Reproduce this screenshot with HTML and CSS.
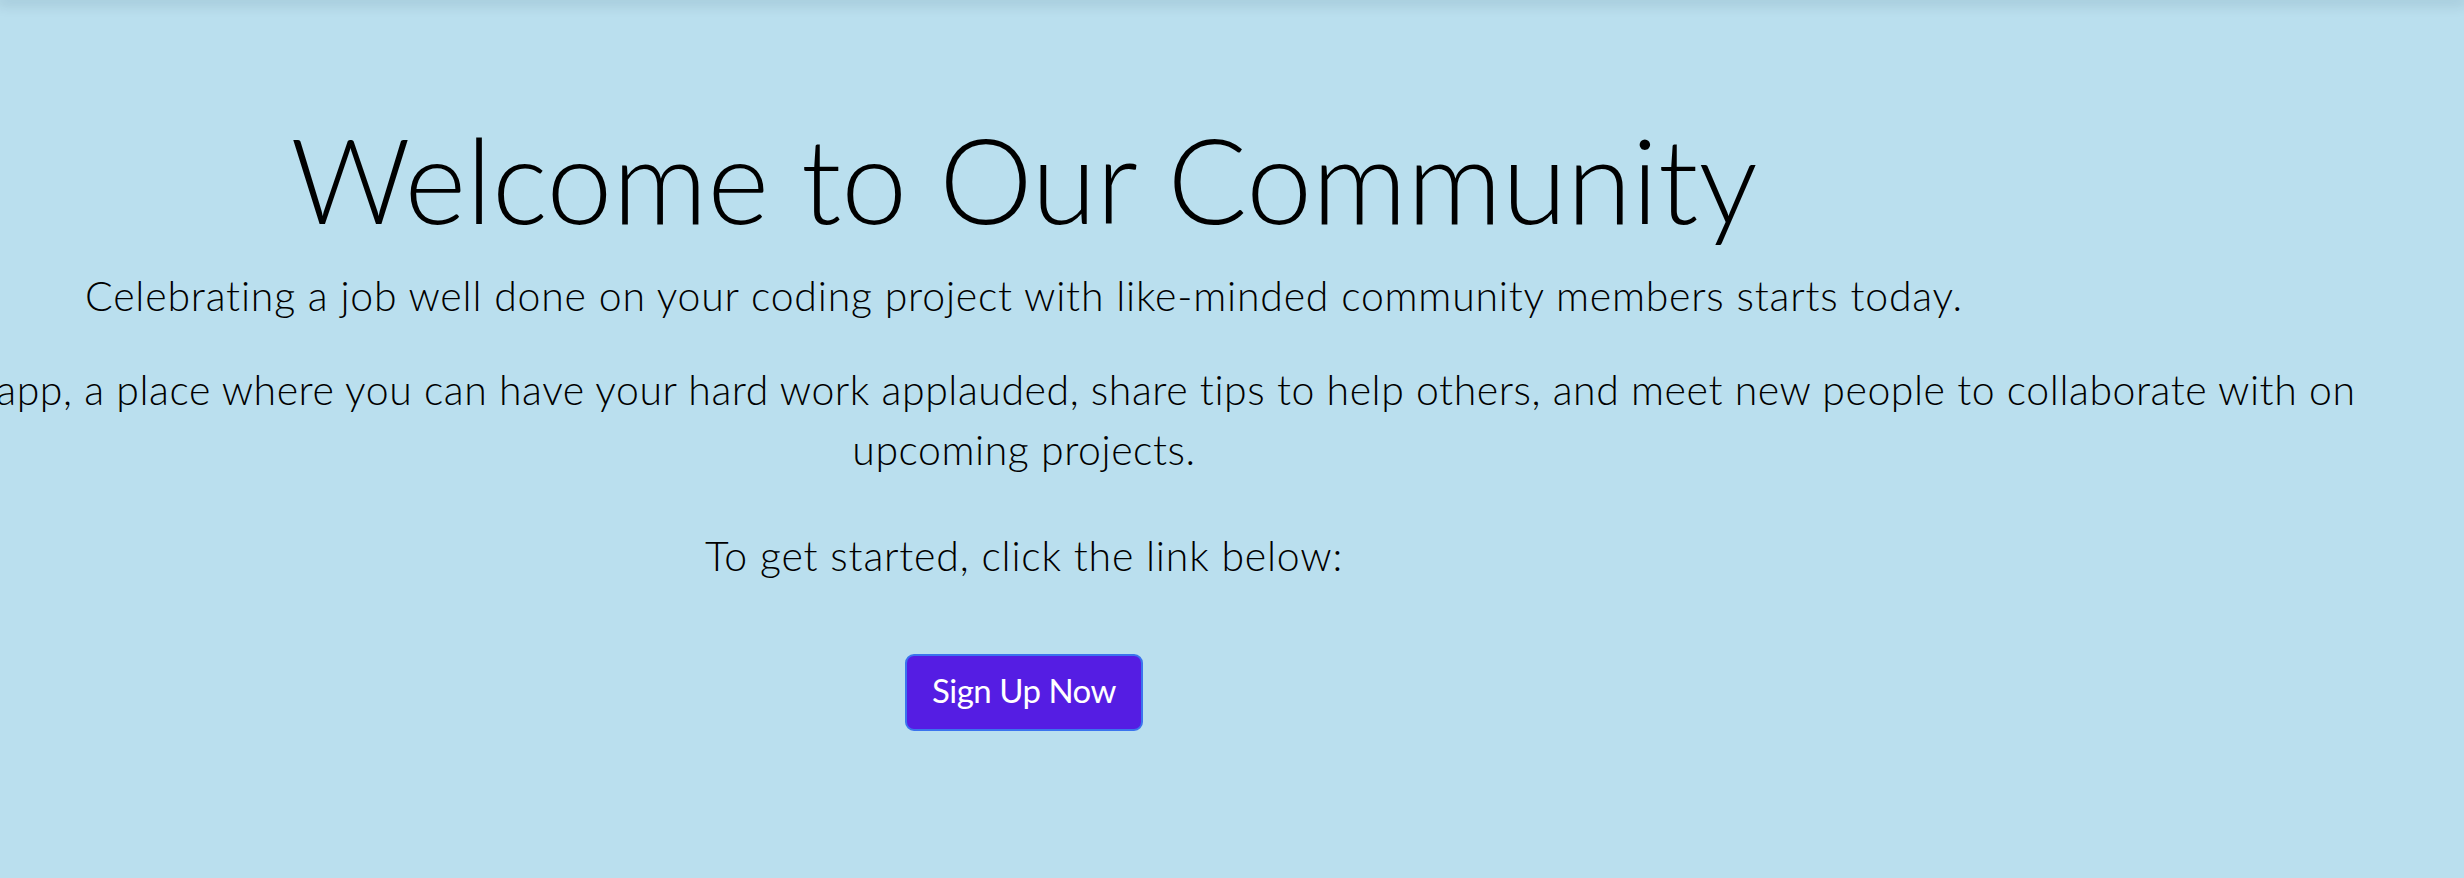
FILE: index.html
```html
<!DOCTYPE html>
<html lang="en">
<head>
<meta charset="utf-8">
<title>Welcome to Our Community</title>
<link rel="stylesheet" href="styles.css">
</head>
<body>
<header class="topbar"></header>
<main class="hero">
  <h1 class="hero-title">Welcome to Our Community</h1>
  <p class="lead">Celebrating a job well done on your coding project with like-minded community members starts today.</p>
  <p class="about">Welcome to our app, a place where you can have your hard work applauded, share tips to help others, and meet new people to collaborate with on<br>upcoming projects.</p>
  <p class="cta-text">To get started, click the link below:</p>
  <a class="signup-btn" href="#">Sign Up Now</a>
</main>
</body>
</html>
```

FILE: styles.css
```css
html, body {
  margin: 0;
  padding: 0;
}

body {
  background: #badfee;
  color: #000;
  font-family: "Lato", "Open Sans", sans-serif;
  font-weight: 300;
  height: 878px;
  overflow: hidden;
}

.topbar {
  height: 0;
  box-shadow: 0 0 14px 3px rgba(0, 40, 60, 0.22);
}

.hero {
  width: 2048px;
  display: flex;
  flex-direction: column;
  align-items: center;
  padding-top: 108px;
}

.hero-title {
  margin: 0;
  font-size: 118px;
  font-weight: 300;
  line-height: 1.2;
  white-space: nowrap;
}

.lead,
.about,
.cta-text {
  margin: 0;
  font-size: 41px;
  letter-spacing: 0.8px;
  line-height: 60px;
  text-align: center;
  white-space: nowrap;
}

.lead {
  margin-top: 16px;
}

.about {
  margin-top: 34px;
  letter-spacing: 0.55px;
}

.cta-text {
  margin-top: 46px;
}

.signup-btn {
  margin-top: 68px;
  display: inline-block;
  padding: 13px 25px 18px;
  font-size: 33px;
  letter-spacing: -0.5px;
  line-height: 42px;
  font-weight: 400;
  color: #fff;
  text-decoration: none;
  background: #551de3;
  border: 2px solid #3b74ee;
  border-radius: 9px;
}
```
